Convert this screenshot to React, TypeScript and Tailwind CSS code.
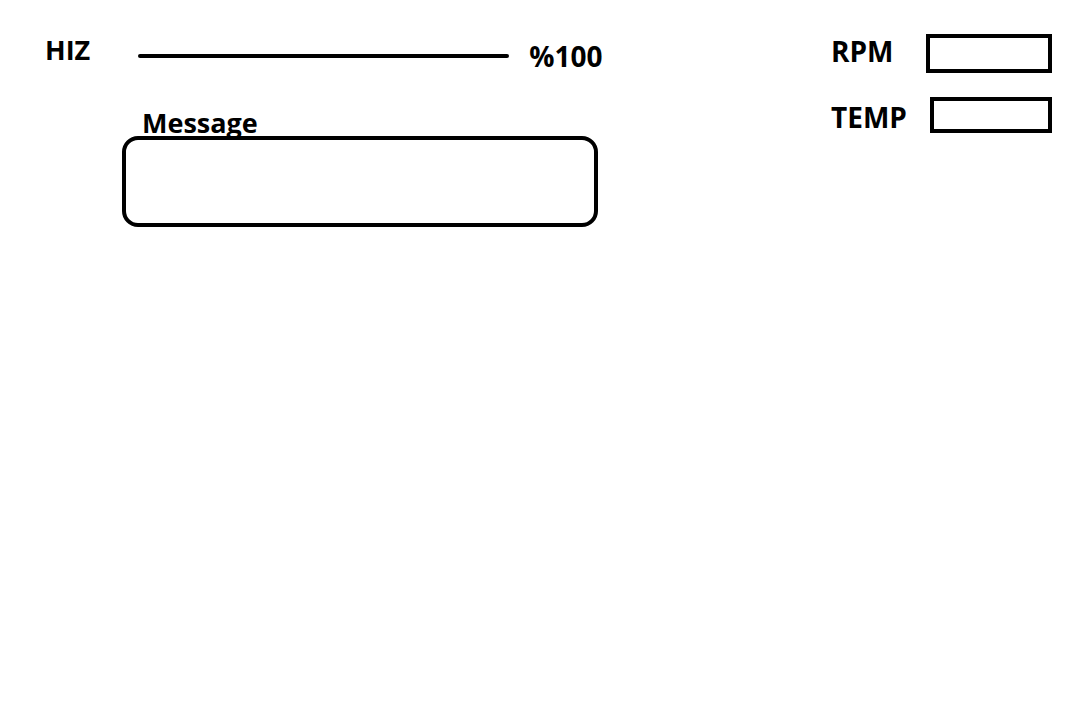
const font = { fontFamily: '"Open Sans", "Noto Sans", sans-serif' };

const ValueBox = ({ width, height }: { width: string; height: string }) => (
  <div className={`${width} ${height} border-4 border-black bg-white`} />
);

const App = () => {
  return (
    <div className="w-[1080px] h-[720px] bg-white text-black font-bold flex justify-between" style={font}>
      <div className="flex flex-col">
        <div className="flex items-start pl-[45px] pt-[36px]">
          <span className="text-[27px] leading-none">HIZ</span>
          <div className="ml-[48px] mt-[18px] w-[371px] h-[4px] rounded-full bg-black" />
          <span className="ml-[20px] mt-[6px] text-[28px] leading-none">%100</span>
        </div>

        <div className="ml-[122px] mt-[39px] flex flex-col">
          <span className="ml-[20px] relative z-10 text-[27px] leading-none">Message</span>
          <div className="w-[476px] h-[91px] border-4 border-black rounded-[16px]" />
        </div>
      </div>

      <div className="flex flex-col pt-[34px] pr-[28px]">
        <div className="flex items-start">
          <span className="w-[95px] mt-[3px] text-[28px] leading-none">RPM</span>
          <ValueBox width="w-[126px]" height="h-[39px]" />
        </div>
        <div className="flex items-start mt-[24px]">
          <span className="w-[99px] mt-[6px] text-[28px] leading-none">TEMP</span>
          <ValueBox width="w-[122px]" height="h-[36px]" />
        </div>
      </div>
    </div>
  );
};

export default App;
